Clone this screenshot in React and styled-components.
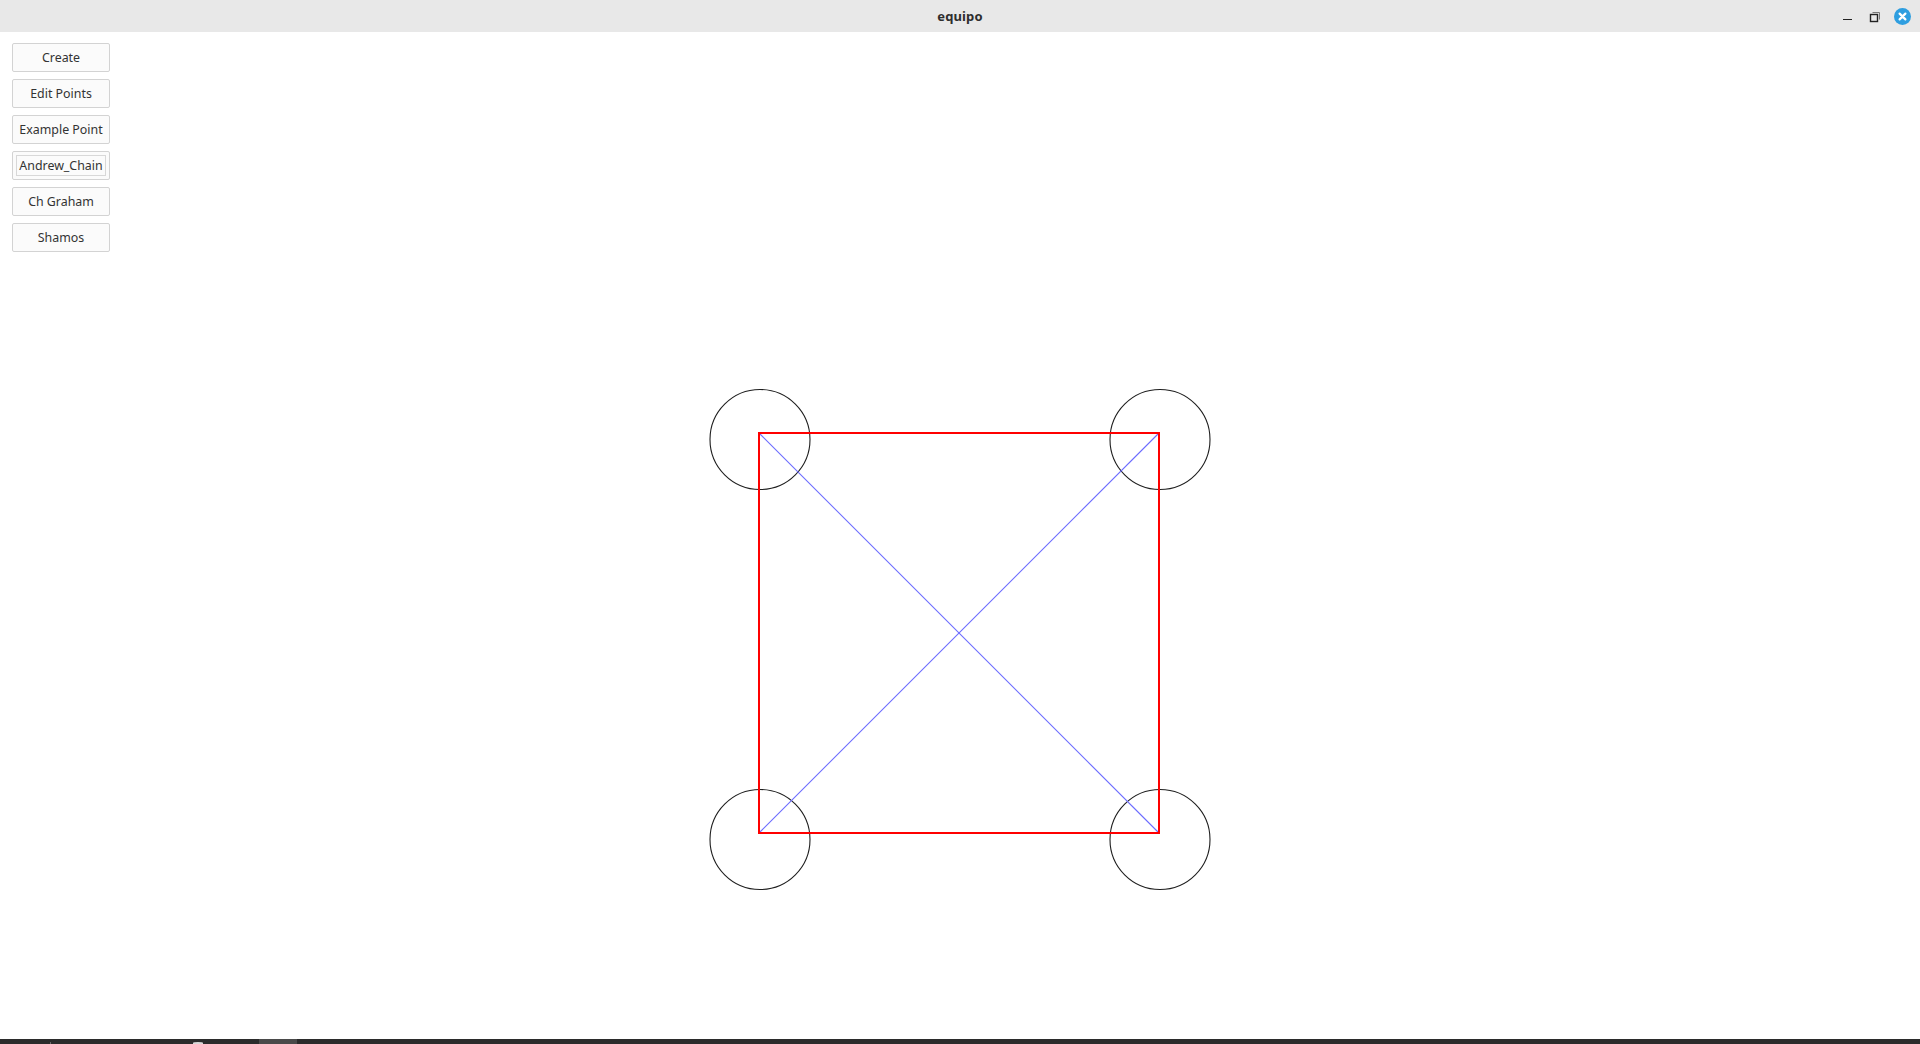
import React from 'react';
import styled, { createGlobalStyle } from 'styled-components';

const GlobalStyle = createGlobalStyle`
  html, body {
    margin: 0;
    padding: 0;
    width: 100%;
    height: 100%;
    overflow: hidden;
    background: #ffffff;
  }
  #root {
    height: 100%;
  }
`;

const buttons = ['Create', 'Edit Points', 'Example Point', 'Andrew_Chain', 'Ch Graham', 'Shamos'];
const points = [
  [759, 401],
  [1159, 401],
  [1159, 801],
  [759, 801],
];

export default function App() {
  return (
    <>
      <GlobalStyle />
      <Window>
        <TitleBar>
          <Title>equipo</Title>
          <WindowControls>
            <MinimizeBtn />
            <MaximizeBtn>
              <svg width="12" height="12" viewBox="0 0 12 12">
                <path d="M3.5 1.5 H10.5 V8.5" fill="none" stroke="#777" strokeWidth="1" />
                <rect x="1.5" y="3.5" width="7" height="7" fill="none" stroke="#222" strokeWidth="1.4" />
              </svg>
            </MaximizeBtn>
            <CloseBtn>
              <svg width="17" height="17" viewBox="0 0 17 17">
                <circle cx="8.5" cy="8.5" r="8.5" fill="#2e9ee0" />
                <path d="M5.6 5.6 L11.4 11.4 M11.4 5.6 L5.6 11.4" stroke="#fff" strokeWidth="2.2" strokeLinecap="round" />
              </svg>
            </CloseBtn>
          </WindowControls>
        </TitleBar>

        <Workspace>
          <Canvas width="1920" height="1007" viewBox="0 0 1920 1007">
            {points.map(([x, y]) => (
              <circle key={`c${x}-${y}`} cx={x + 1} cy={y + 6.5} r="50" fill="none" stroke="#1e1e1e" strokeWidth="1.1" />
            ))}
            <line x1="759" y1="401" x2="1159" y2="801" stroke="#6c6cff" strokeWidth="1.1" />
            <line x1="1159" y1="401" x2="759" y2="801" stroke="#6c6cff" strokeWidth="1.1" />
            <rect x="759" y="401" width="400" height="400" fill="none" stroke="#ff0000" strokeWidth="2" />
          </Canvas>

          <ToolPanel>
            {buttons.map((b) => (
              <ToolButton key={b} $focused={b === 'Andrew_Chain'}>
                {b}
              </ToolButton>
            ))}
          </ToolPanel>
        </Workspace>

        <Taskbar>
          <TaskMark $left={50} $width={1} $color="#6a6a6a" />
          <TaskMark $left={193} $width={10} $color="#d8d8d8" />
          <TaskMark $left={259} $width={38} $color="#4a4a4a" />
        </Taskbar>
      </Window>
    </>
  );
}

const Window = styled.div`
  display: flex;
  flex-direction: column;
  height: 100%;
  font-family: 'Noto Sans', 'Open Sans', 'DejaVu Sans', sans-serif;
`;

const TitleBar = styled.div`
  position: relative;
  height: 32px;
  flex: 0 0 32px;
  background: #e8e8e8;
  display: flex;
  align-items: center;
  justify-content: center;
`;

const Title = styled.div`
  font-size: 13px;
  font-weight: 700;
  color: #2e2e2e;
  letter-spacing: 0.1px;
`;

const WindowControls = styled.div`
  position: absolute;
  right: 9px;
  top: 0;
  height: 100%;
  display: flex;
  align-items: center;
`;

const MinimizeBtn = styled.div`
  width: 9px;
  height: 1.5px;
  background: #222;
  margin-top: 7px;
  margin-right: 17px;
`;

const MaximizeBtn = styled.div`
  display: flex;
  width: 12px;
  height: 12px;
  margin-right: 13px;
  margin-top: 1px;
`;

const CloseBtn = styled.div`
  display: flex;
  width: 17px;
  height: 17px;
  margin-top: 1px;
`;

const Workspace = styled.div`
  position: relative;
  flex: 1;
  background: #ffffff;
`;

const Canvas = styled.svg`
  position: absolute;
  left: 0;
  top: 0;
`;

const ToolPanel = styled.div`
  position: relative;
  display: flex;
  flex-direction: column;
  gap: 7px;
  padding: 11px 0 0 12px;
  width: 98px;
`;

const ToolButton = styled.div`
  position: relative;
  box-sizing: border-box;
  height: 29px;
  width: 98px;
  display: flex;
  align-items: center;
  justify-content: center;
  padding-top: 1px;
  border: 1px solid #d3d3d3;
  border-radius: 2px;
  background: #fbfbfb;
  font-size: 12.4px;
  line-height: 16px;
  color: #333333;
  &::after {
    content: '';
    display: ${(p) => (p.$focused ? 'block' : 'none')};
    position: absolute;
    inset: 3px;
    border: 1px solid #d8d8d8;
  }
`;

const Taskbar = styled.div`
  position: relative;
  height: 5px;
  flex: 0 0 5px;
  background: #2b2b2b;
`;

const TaskMark = styled.div`
  position: absolute;
  top: ${(p) => (p.$color === '#4a4a4a' ? 0 : 3)}px;
  bottom: 0;
  left: ${(p) => p.$left}px;
  width: ${(p) => p.$width}px;
  background: ${(p) => p.$color};
  border-radius: ${(p) => (p.$width > 5 && p.$color !== '#4a4a4a' ? '50% 50% 0 0' : '0')};
`;
